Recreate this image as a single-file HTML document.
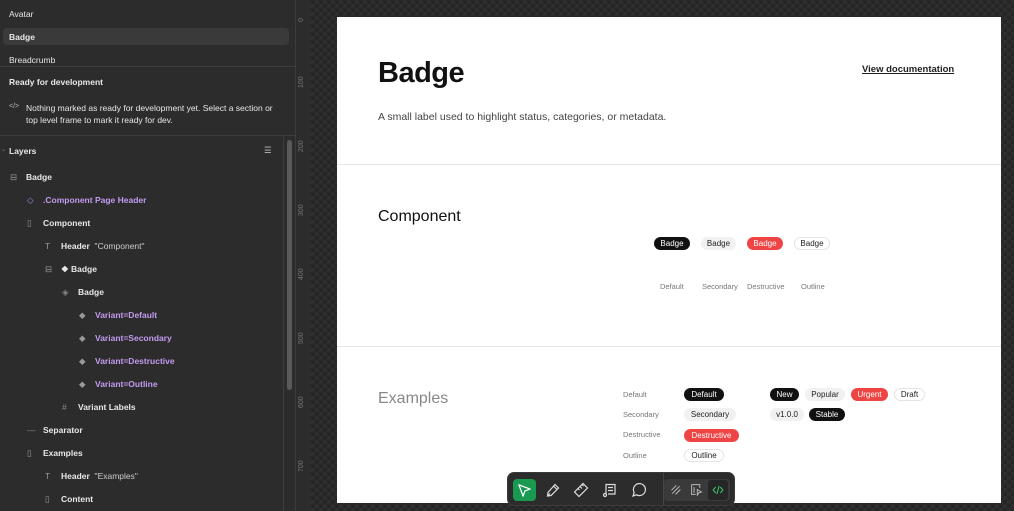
<!DOCTYPE html><html><head><style>
*{margin:0;padding:0;box-sizing:border-box}
body{width:1014px;height:511px;overflow:hidden;background:#1e1e1e;font-family:"Liberation Sans",sans-serif;position:relative}
.side{position:absolute;left:0;top:0;width:295px;height:511px;background:#2c2c2c;color:#e8e8e8;font-size:8.5px}
.t{position:absolute;white-space:nowrap}
.b{font-weight:bold}
.p{color:#c39bf0}
.hl{position:absolute;height:1px;background:#3e3e3e}
.ruler{position:absolute;left:295px;top:0;width:16px;height:511px;background:#2c2c2c;border-left:1px solid #3c3c3c}
.rl{position:absolute;left:2px;color:#777;font-size:7px;transform:rotate(-90deg);transform-origin:left top;width:20px}
.canvas{position:absolute;left:311px;top:0;width:703px;height:511px;background-color:#262626;background-image:linear-gradient(45deg,#2e2e2e 25%,transparent 25%,transparent 75%,#2e2e2e 75%),linear-gradient(45deg,#2e2e2e 25%,transparent 25%,transparent 75%,#2e2e2e 75%);background-size:8px 8px;background-position:0 0,4px 4px}
.frame{position:absolute;left:337px;top:17px;width:664px;height:486px;background:#fff;color:#111}
.bd{position:absolute;height:13px;border-radius:7px;font-size:8px;line-height:13px;text-align:center;white-space:nowrap}
.d{background:#111;color:#fff}.s{background:#f1f1f1;color:#222}.r{background:#ef4444;color:#fff}.o{background:#fff;border:1px solid #e4e4e4;color:#222;line-height:11px}
.lb{position:absolute;font-size:7.5px;color:#777;white-space:nowrap}
.tb{position:absolute;left:507px;top:472px;width:228px;height:34px;background:#2c2c2c;border-radius:7px;border:1px solid #3a3a3a}
.ic{position:absolute;top:8px}
</style></head><body>
<div class="side">
<div class="t" style="left:9px;top:9px">Avatar</div>
<div style="position:absolute;left:3px;top:28px;width:286px;height:17px;background:#3a3a3a;border-radius:4px"></div>
<div class="t b" style="left:9px;top:32px">Badge</div>
<div class="t" style="left:9px;top:55px">Breadcrumb</div>
<div class="hl" style="left:0;top:66px;width:295px"></div>
<div class="t b" style="left:9px;top:77px">Ready for development</div>
<div class="t" style="left:9px;top:103px;font-size:7px;color:#bbb">&lt;/&gt;</div>
<div class="t" style="left:26px;top:102px;line-height:12px">Nothing marked as ready for development yet. Select a section or<br>top level frame to mark it ready for dev.</div>
<div class="hl" style="left:0;top:135px;width:295px"></div>
<div class="hl" style="left:283px;top:135px;width:1px;height:376px"></div>
<div style="position:absolute;left:287px;top:140px;width:5px;height:250px;background:#5a5a5a;border-radius:3px"></div>
<div class="t" style="left:1px;top:146px;color:#888;font-size:6px">⌄</div>
<div class="t b" style="left:9px;top:146px">Layers</div>
<div class="t" style="left:264px;top:145px;color:#bbb">☰</div>
<div class="t" style="left:10px;top:172px;color:#999">⊟</div><div class="t b" style="left:26px;top:172px">Badge</div>
<div class="t p" style="left:27px;top:195px;color:#a98bd0">◇</div><div class="t b p" style="left:43px;top:195px">.Component Page Header</div>
<div class="t" style="left:27px;top:218px;color:#999">▯</div><div class="t b" style="left:43px;top:218px">Component</div>
<div class="t" style="left:45px;top:241px;color:#999">T</div><div class="t b" style="left:61px;top:241px">Header <span style="font-weight:normal;color:#ccc">&nbsp;"Component"</span></div>
<div class="t" style="left:45px;top:264px;color:#999">⊟</div><div class="t b" style="left:61px;top:264px">❖ Badge</div>
<div class="t" style="left:62px;top:287px;color:#888">◈</div><div class="t b" style="left:78px;top:287px">Badge</div>
<div class="t" style="left:79px;top:310px;color:#999">◆</div><div class="t b p" style="left:95px;top:310px">Variant=Default</div>
<div class="t" style="left:79px;top:333px;color:#999">◆</div><div class="t b p" style="left:95px;top:333px">Variant=Secondary</div>
<div class="t" style="left:79px;top:356px;color:#999">◆</div><div class="t b p" style="left:95px;top:356px">Variant=Destructive</div>
<div class="t" style="left:79px;top:379px;color:#999">◆</div><div class="t b p" style="left:95px;top:379px">Variant=Outline</div>
<div class="t" style="left:62px;top:402px;color:#888">#</div><div class="t b" style="left:78px;top:402px">Variant Labels</div>
<div class="t" style="left:27px;top:425px;color:#888">—</div><div class="t b" style="left:43px;top:425px">Separator</div>
<div class="t" style="left:27px;top:448px;color:#999">▯</div><div class="t b" style="left:43px;top:448px">Examples</div>
<div class="t" style="left:45px;top:471px;color:#999">T</div><div class="t b" style="left:61px;top:471px">Header <span style="font-weight:normal;color:#ccc">&nbsp;"Examples"</span></div>
<div class="t" style="left:45px;top:494px;color:#999">▯</div><div class="t b" style="left:61px;top:494px">Content</div>
</div>
<div class="ruler">
<div class="rl" style="top:22px">0</div><div class="rl" style="top:88px">100</div><div class="rl" style="top:152px">200</div><div class="rl" style="top:216px">300</div><div class="rl" style="top:280px">400</div><div class="rl" style="top:344px">500</div><div class="rl" style="top:408px">600</div><div class="rl" style="top:472px">700</div>
</div>
<div class="canvas"></div>
<div class="frame">
<div class="t b" style="left:41px;top:40px;font-size:29px;letter-spacing:-0.5px">Badge</div>
<div class="t" style="left:525px;top:47px;font-size:9.5px;text-decoration:underline;color:#222;font-weight:bold">View documentation</div>
<div class="t" style="left:41px;top:94px;font-size:10.5px;color:#444">A small label used to highlight status, categories, or metadata.</div>
<div class="hl" style="left:0;top:147px;width:664px;background:#e6e6e6"></div>
<div class="t" style="left:41px;top:191px;font-size:16px">Component</div>
<div class="hl" style="left:0;top:329px;width:664px;background:#e6e6e6"></div>
<div class="t" style="left:41px;top:373px;font-size:16px;color:#888">Examples</div>
</div>
<div class="bd d" style="left:654px;top:237px;width:36px">Badge</div>
<div class="bd s" style="left:701px;top:237px;width:35px">Badge</div>
<div class="bd r" style="left:747px;top:237px;width:36px">Badge</div>
<div class="bd o" style="left:794px;top:237px;width:36px">Badge</div>
<div class="lb" style="left:660px;top:282px">Default</div><div class="lb" style="left:702px;top:282px">Secondary</div><div class="lb" style="left:747px;top:282px">Destructive</div><div class="lb" style="left:801px;top:282px">Outline</div>
<div class="lb" style="left:623px;top:390px">Default</div><div class="lb" style="left:623px;top:410px">Secondary</div><div class="lb" style="left:623px;top:430px">Destructive</div><div class="lb" style="left:623px;top:451px">Outline</div>
<div class="bd d" style="left:684px;top:388px;width:40px">Default</div>
<div class="bd s" style="left:684px;top:408px;width:52px">Secondary</div>
<div class="bd r" style="left:684px;top:429px;width:55px">Destructive</div>
<div class="bd o" style="left:684px;top:449px;width:40px">Outline</div>
<div class="bd d" style="left:770px;top:388px;width:29px">New</div>
<div class="bd s" style="left:805px;top:388px;width:40px">Popular</div>
<div class="bd r" style="left:851px;top:388px;width:37px">Urgent</div>
<div class="bd o" style="left:894px;top:388px;width:31px">Draft</div>
<div class="bd s" style="left:770px;top:408px;width:34px">v1.0.0</div>
<div class="bd d" style="left:809px;top:408px;width:36px">Stable</div>
<div class="tb">
<div style="position:absolute;left:5px;top:6px;width:23px;height:22px;background:#1a9950;border-radius:4px"></div>
<svg class="ic" style="left:9px;top:10px" width="15" height="15" viewBox="0 0 16 16" fill="none" stroke="#fff" stroke-width="1.3" stroke-linejoin="round"><path d="M2 2L14 6.5L8.5 8.5L6.5 14Z"/></svg>
<svg class="ic" style="left:37px;top:9px" width="16" height="16" viewBox="0 0 16 16" fill="none" stroke="#ddd" stroke-width="1.2"><path d="M10 2.5L13.5 6L6 13.5L2.5 14L3 10.5Z M8.5 4L12 7.5 M2.5 14L5 11.5"/></svg>
<svg class="ic" style="left:65px;top:9px" width="16" height="16" viewBox="0 0 16 16" fill="none" stroke="#ddd" stroke-width="1.2"><path d="M1.5 10L6 14.5L14.5 6L10 1.5Z M5 6.5L6.5 8 M7 4.5L9 6.5 M9 2.5L10.5 4"/></svg>
<svg class="ic" style="left:94px;top:9px" width="16" height="16" viewBox="0 0 16 16" fill="none" stroke="#ddd" stroke-width="1.2"><path d="M4 12V2.5H13V12H6 M6 5.5H11 M6 8.5H11"/><circle cx="3" cy="13" r="1.5"/></svg>
<svg class="ic" style="left:123px;top:9px" width="16" height="16" viewBox="0 0 16 16" fill="none" stroke="#ddd" stroke-width="1.2"><path d="M2 14L3.2 10.5A6 6 0 1 1 5.5 12.8Z"/></svg>
<div style="position:absolute;left:155px;top:0;width:1px;height:32px;background:#444"></div>
<div style="position:absolute;left:156px;top:6px;width:66px;height:22px;background:#3a3a3a;border-radius:4px"></div>
<svg class="ic" style="left:161px;top:10px" width="13" height="13" viewBox="0 0 16 16" fill="none" stroke="#bbb" stroke-width="1.2"><path d="M3 9L9 3 M4 13L13 4 M8 14L14 8"/></svg>
<svg class="ic" style="left:182px;top:10px" width="13" height="13" viewBox="0 0 16 16" fill="none" stroke="#bbb" stroke-width="1.2"><path d="M2 2H12V6 M2 2V14H7 M5 5V12 M9 8L14 11L11 12L9 15Z"/></svg>
<div style="position:absolute;left:200px;top:7px;width:20px;height:20px;background:#262626;border-radius:3px"></div>
<svg class="ic" style="left:204px;top:11px" width="12" height="12" viewBox="0 0 16 16" fill="none" stroke="#3fbf6f" stroke-width="1.4"><path d="M5 4L1.5 8L5 12 M11 4L14.5 8L11 12 M9.5 2.5L6.5 13.5"/></svg>
</div>
</body></html>
